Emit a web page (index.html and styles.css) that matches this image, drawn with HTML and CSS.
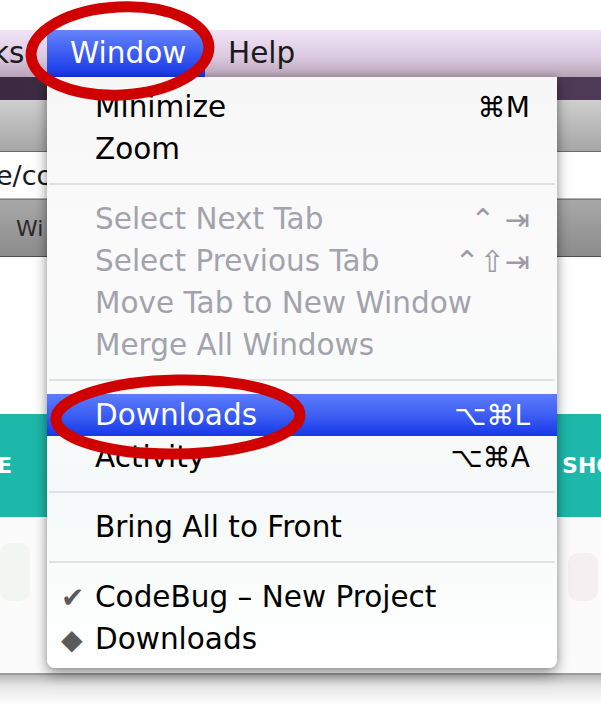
FILE: index.html
```html
<!DOCTYPE html>
<html lang="en">
<head>
  <meta charset="UTF-8" />
  <meta name="viewport" content="width=device-width, initial-scale=1" />
  <title>Window menu</title>
  <link rel="stylesheet" href="styles.css">
</head>
<body>
  <div class="screen">
    <div class="top-gap"></div>

    <div class="menubar">
      <span class="mb-item mb-cut">ks</span>
      <span class="mb-item mb-active">Window</span>
      <span class="mb-item">Help</span>
    </div>

    <div class="chrome-dark"></div>
    <div class="toolbar"></div>
    <div class="address"><span>e/co</span></div>
    <div class="tabbar"><span>Wi</span></div>

    <div class="page">
      <div class="page-top"></div>
      <div class="teal">
        <span class="teal-left">E</span>
        <span class="teal-right">SHO</span>
      </div>
      <div class="page-bottom">
        <div class="blob blob-left"></div>
        <div class="blob blob-right"></div>
      </div>
    </div>
    <div class="foot-shadow"></div>

    <!-- dropdown -->
    <div class="menu">
      <div class="item"><span>Minimize</span><span class="key">⌘M</span></div>
      <div class="item"><span>Zoom</span></div>
      <div class="sep"></div>
      <div class="item off"><span>Select Next Tab</span><span class="key">⌃ ⇥</span></div>
      <div class="item off"><span>Select Previous Tab</span><span class="key">⌃⇧⇥</span></div>
      <div class="item off"><span>Move Tab to New Window</span></div>
      <div class="item off"><span>Merge All Windows</span></div>
      <div class="sep"></div>
      <div class="item active"><span>Downloads</span><span class="key">⌥⌘L</span></div>
      <div class="item"><span>Activity</span><span class="key">⌥⌘A</span></div>
      <div class="sep"></div>
      <div class="item"><span>Bring All to Front</span></div>
      <div class="sep"></div>
      <div class="item"><span class="mark check">✔</span><span>CodeBug – New Project</span></div>
      <div class="item"><span class="mark diamond">◆</span><span>Downloads</span></div>
    </div>

    <!-- red annotation rings -->
    <svg class="marks" width="601" height="707" viewBox="0 0 601 707">
      <ellipse cx="120" cy="51" rx="89" ry="44" transform="rotate(-3 120 51)" />
      <ellipse cx="178" cy="417" rx="122" ry="37" transform="rotate(-1 178 417)" />
    </svg>
  </div>
</body>
</html>
```

FILE: styles.css
```css
html, body {
  margin: 0;
  background: #ffffff;
}

.screen {
  position: relative;
  width: 601px;
  height: 707px;
  overflow: hidden;
  font-family: 'DejaVu Sans', 'Liberation Sans', sans-serif;
  background: #ffffff;
}

.top-gap {
  height: 30px;
  background: #ffffff;
}

/* mac menubar */
.menubar {
  height: 47px;
  display: flex;
  align-items: center;
  background: linear-gradient(180deg, #f1e4f7 0%, #dccbe2 55%, #b7a3b5 100%);
  font-size: 29.5px;
  color: #1b1b1b;
}

.mb-item {
  height: 47px;
  line-height: 47px;
  white-space: nowrap;
}

.mb-cut {
  width: 47px;
  overflow: hidden;
  text-indent: -8px;
}

.mb-active {
  width: 158px;
  box-sizing: border-box;
  padding-left: 23px;
  color: #ffffff;
  background: linear-gradient(180deg, #6585fb 0%, #3c5cf2 50%, #1636e6 100%);
  margin-right: 23px;
}

/* browser window behind the menu */
.chrome-dark {
  height: 23px;
  background: linear-gradient(90deg, #3b2a42, #4e3a57);
}

.toolbar {
  height: 51px;
  background: linear-gradient(180deg, #cfcfcf, #a6a6a6);
  border-bottom: 1px solid #6a6a6a;
}

.address {
  height: 46px;
  border-bottom: 1px solid #b5b5b5;
  background: #ffffff;
  display: flex;
  align-items: center;
  font-size: 27px;
  color: #1a1a1a;
}

.address span {
  margin-left: -4px;
}

.tabbar {
  height: 56px;
  background: linear-gradient(180deg, #a8a8a8, #8c8c8c);
  border-top: 1px solid #7a7a7a;
  border-bottom: 1px solid #4f4f4f;
  display: flex;
  align-items: center;
  font-size: 22px;
  color: #2a2a2a;
}

.tabbar span {
  margin-left: 16px;
}

.page-top {
  height: 157px;
  background: #ffffff;
}

.teal {
  height: 103px;
  background: #1db8aa;
  display: flex;
  align-items: center;
  justify-content: space-between;
  font-size: 22px;
  font-weight: bold;
  color: #ffffff;
}

.teal-left {
  margin-left: -3px;
}

.teal-right {
  margin-right: -14px;
}

.page-bottom {
  position: relative;
  height: 156px;
  background: #fbfbfb;
  border-bottom: 2px solid #9c9c9c;
}

.blob {
  position: absolute;
  border-radius: 10px;
}

.blob-left {
  left: 0;
  top: 26px;
  width: 30px;
  height: 58px;
  background: #f1f6f3;
}

.blob-right {
  left: 568px;
  top: 36px;
  width: 30px;
  height: 48px;
  background: #f6eff1;
}

.foot-shadow {
  height: 30px;
  background: linear-gradient(180deg, #b9b9b9 0%, #e4e4e4 35%, #ffffff 100%);
}

/* dropdown menu */
.menu {
  position: absolute;
  left: 47px;
  top: 77px;
  width: 510px;
  padding: 9px 0 8px;
  box-sizing: border-box;
  background: linear-gradient(180deg, #f7f7f7 0%, #fbfbfb 40%, #f6f9f9 70%, #ffffff 100%);
  border-radius: 0 0 8px 8px;
  box-shadow: 0 6px 14px rgba(0, 0, 0, 0.38), 0 0 6px rgba(0, 0, 0, 0.15);
  font-size: 29.5px;
  color: #000000;
}

.item {
  position: relative;
  height: 42px;
  display: flex;
  align-items: center;
  justify-content: space-between;
  padding: 0 27px 0 48px;
  white-space: nowrap;
}

.item.off {
  color: #a2a3ad;
}

.item.active {
  color: #ffffff;
  background: linear-gradient(180deg, #5c7dfa 0%, #3d5ef2 50%, #1638e8 100%);
}

.key {
  font-size: 28px;
}

.off .key {
  font-size: 30px;
  color: #9a9ba6;
}

.mark {
  position: absolute;
  left: 14px;
  color: #5a5a5a;
  font-size: 28px;
}

.sep {
  height: 28px;
  display: flex;
  align-items: center;
}

.sep::after {
  content: '';
  flex: 1;
  height: 2px;
  margin: 0 2px;
  background: #e1e1e1;
}

/* annotation overlay */
.marks {
  position: absolute;
  left: 0;
  top: 0;
  pointer-events: none;
}

.marks ellipse {
  fill: none;
  stroke: #cf0000;
  stroke-width: 11;
}
```
